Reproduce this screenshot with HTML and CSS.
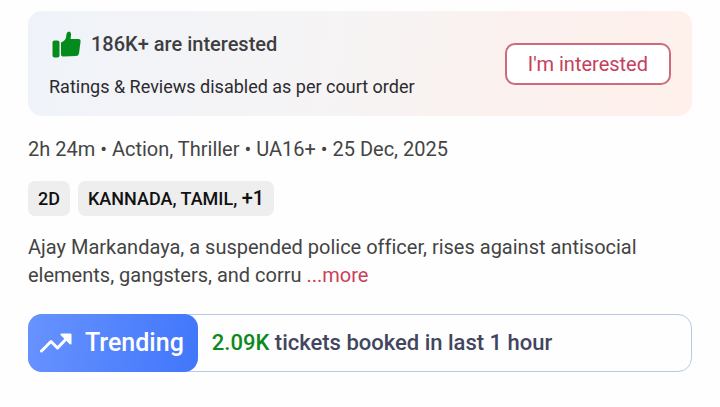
FILE: index.html
```html
<!DOCTYPE html>
<html lang="en">
<head>
    <meta charset="UTF-8">
    <meta name="viewport" content="width=device-width, initial-scale=1.0">
    <title>Movie Details</title>
    <link rel="stylesheet" href="styles.css">
</head>
<body>
    <main class="movie-details">
        <section class="interest-card">
            <div class="interest-info">
                <div class="interest-count">
                    <svg class="thumb-icon" viewBox="0 0 30 28" aria-hidden="true">
                        <rect x="1.500" y="10.500" width="7" height="17" rx="2"/>
                        <path d="M10 12.500Q14.500 10.500 15 7.500L15.500 4Q16 1.500 18 1.500Q20.500 2 20 5.500L19.500 9H27.500Q30 9 29.500 12L28 23.500Q27.500 26 25 26L12 26.500Q10 26.500 10 24.500Z"/>
                    </svg>
                    <span>186K+ are interested</span>
                </div>
                <p class="court-note">Ratings &amp; Reviews disabled as per court order</p>
            </div>
            <button type="button" class="interest-btn">I'm interested</button>
        </section>

        <p class="meta">2h 24m • Action, Thriller • UA16+ • 25 Dec, 2025</p>

        <div class="tags">
            <span class="tag">2D</span>
            <span class="tag">KANNADA, TAMIL, <span class="tag-more">+1</span></span>
        </div>

        <p class="synopsis">Ajay Markandaya, a suspended police officer, rises against antisocial elements, gangsters, and corru <a href="#" class="more-link">...more</a></p>

        <section class="trending">
            <div class="trending-label">
                <svg class="trend-icon" viewBox="0 0 32 20" aria-hidden="true">
                    <path d="M1.500 18L11 8.500L17.500 15L29 3"/>
                    <path class="trend-head" d="M21.500 1.500H30.500V10.500L26 6Z"/>
                </svg>
                <span>Trending</span>
            </div>
            <p class="trending-text"><span class="ticket-count">2.09K</span> tickets booked in last 1 hour</p>
        </section>
    </main>
</body>
</html>
```
FILE: styles.css
```css
* {
    margin: 0;
    padding: 0;
    box-sizing: border-box;
}

body {
    font-family: Roboto, 'Liberation Sans', sans-serif;
    font-size: 20px;
    line-height: 28px;
    font-variant-ligatures: none;
    background-color: #fefefe;
    color: #444;
}

.movie-details {
    padding: 11px 28px;
}

/* Interest card */
.interest-card {
    display: flex;
    justify-content: space-between;
    align-items: center;
    padding: 19px 21px 15px;
    border-radius: 14px;
    background: linear-gradient(100deg, #eff3f9, #f6f4f5 45%, #fbf1ee 75%, #fff0eb);
}

.interest-count {
    display: flex;
    align-items: center;
    gap: 10px;
    margin-bottom: 15px;
    padding-left: 2px;
    font-weight: 500;
    color: #3e3e42;
}

.thumb-icon {
    width: 30px;
    height: 28px;
    fill: #058b1c;
}

.court-note {
    font-size: 18px;
    color: #2b2b2f;
}

.interest-btn {
    margin-bottom: 4px;
    padding: 5px 21px;
    border: 2px solid #cd6a7c;
    border-radius: 10px;
    background-color: #fff;
    font-family: inherit;
    font-size: 20px;
    line-height: 28px;
    color: #c5405c;
    cursor: pointer;
}

.meta {
    margin-top: 19px;
}

/* Format and language tags */
.tags {
    display: flex;
    gap: 8px;
    margin-top: 18px;
}

.tag {
    padding: 4px 10px;
    border-radius: 7px;
    background-color: #eee;
    font-size: 18px;
    line-height: 27px;
    font-weight: 500;
    color: #111;
}

.tag-more {
    font-size: 20px;
}

.synopsis {
    margin-top: 17px;
}

.more-link {
    color: #cb3f57;
    text-decoration: none;
}

/* Trending banner */
.trending {
    display: flex;
    align-items: center;
    margin-top: 25px;
    border: 1px solid #b9c8e4;
    border-radius: 14px;
    font-weight: 500;
}

.trending-label {
    display: flex;
    align-items: center;
    gap: 13px;
    margin: -1px;
    padding: 15px 14px 15px 12px;
    border-radius: 14px;
    background: linear-gradient(100deg, #6893ff, #4176fb);
    font-size: 25px;
    color: #fff;
}

.trend-icon {
    width: 32px;
    height: 20px;
    fill: none;
    stroke: #fff;
    stroke-width: 3;
    stroke-linecap: round;
    stroke-linejoin: round;
}

.trend-head {
    fill: #fff;
    stroke-width: 2;
}

.trending-text {
    padding-left: 15px;
    font-size: 22px;
    color: #424560;
}

.ticket-count {
    color: #0b8a20;
}
```
